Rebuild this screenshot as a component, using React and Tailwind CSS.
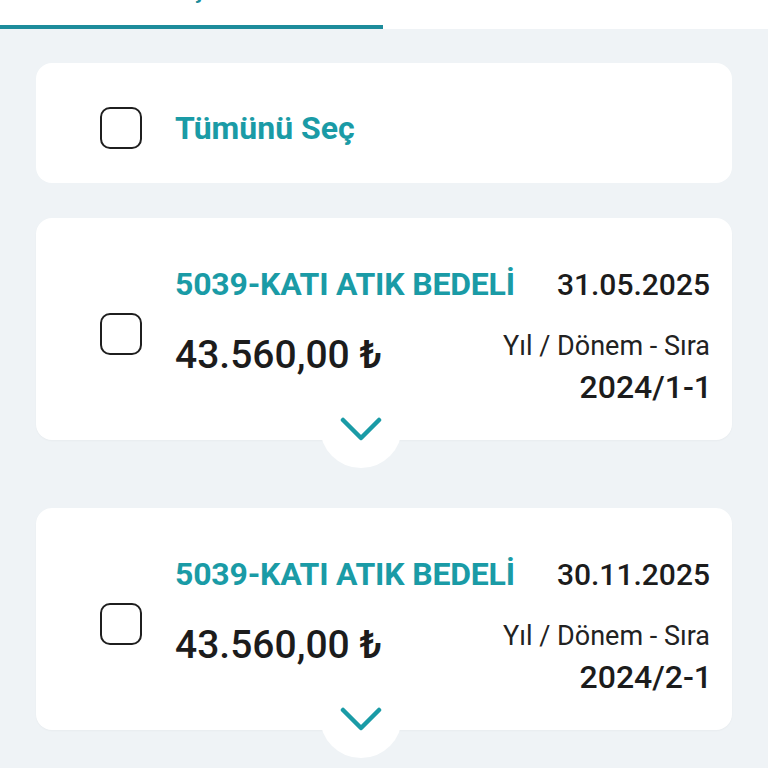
import React from 'react';

const bills = [
  { id: 1, title: '5039-KATI ATIK BEDELİ', date: '31.05.2025', amount: '43.560,00 ₺', period: '2024/1-1' },
  { id: 2, title: '5039-KATI ATIK BEDELİ', date: '30.11.2025', amount: '43.560,00 ₺', period: '2024/2-1' },
];

function Checkbox({ className = '' }) {
  return (
    <div
      className={`w-[42px] h-[42px] shrink-0 rounded-[10px] border-2 border-[#1f1f1f] bg-white ${className}`}
    />
  );
}

function Tabs() {
  return (
    <div className="flex h-[29px] bg-white overflow-hidden">
      <div className="w-[383px] h-[29px] border-b-[4px] border-[#1d8c9b] flex justify-center">
        <span className="text-[30px] leading-none font-medium text-[#1d8c9b] -mt-[28px] ml-[34px]">Borçlarım</span>
      </div>
      <div className="flex-1 flex justify-center">
        <span className="text-[30px] leading-none font-medium text-[#333] -mt-[28px]">Ödemelerim</span>
      </div>
    </div>
  );
}

function BillCard({ bill }) {
  return (
    <div className="relative mx-[36px] h-[222px] bg-white rounded-[16px] shadow-[0_1px_2px_rgba(0,0,0,0.03)] flex">
      <Checkbox className="ml-[64px] mt-[95px]" />
      <div className="flex-1 pl-[33px] pr-[22px] pt-[50px]">
        <div className="flex items-baseline justify-between leading-none">
          <span className="text-[32px] font-bold text-[#1a9ba6] tracking-[-0.2px]">{bill.title}</span>
          <span className="text-[30px] font-medium text-[#1c1c1c]">{bill.date}</span>
        </div>
        <div className="flex justify-between mt-[33px] leading-none">
          <span className="text-[39px] font-medium text-[#1c1c1c] mt-[3px]">{bill.amount}</span>
          <div className="flex flex-col items-end">
            <span className="text-[27px] text-[#222]">Yıl / Dönem - Sıra</span>
            <span className="text-[32px] font-medium text-[#1c1c1c] mt-[11px] mr-[-2px]">{bill.period}</span>
          </div>
        </div>
      </div>
      <div className="absolute left-[284px] top-[168px] w-[82px] h-[82px] rounded-full bg-white flex items-start justify-center pt-[31px]">
        <svg width="42" height="26" viewBox="0 0 42 26" fill="none">
          <path d="M3 3 L21 21 L39 3" stroke="#1a9ba6" strokeWidth="4.5" strokeLinecap="round" strokeLinejoin="round" />
        </svg>
      </div>
    </div>
  );
}

export default function App() {
  return (
    <div className="w-[768px] h-[768px] overflow-hidden bg-[#eff3f6]" style={{ fontFamily: 'Roboto, "Liberation Sans", sans-serif' }}>
      <Tabs />
      <div className="pt-[34px]">
        <div className="mx-[36px] h-[120px] bg-white rounded-[16px] flex items-start">
          <Checkbox className="ml-[64px] mt-[44px]" />
          <span className="ml-[33px] mt-[49px] text-[32px] font-bold text-[#1a9ba6] leading-none">Tümünü Seç</span>
        </div>
        <div className="mt-[35px] flex flex-col gap-[68px]">
          {bills.map((bill) => (
            <BillCard key={bill.id} bill={bill} />
          ))}
        </div>
      </div>
    </div>
  );
}
